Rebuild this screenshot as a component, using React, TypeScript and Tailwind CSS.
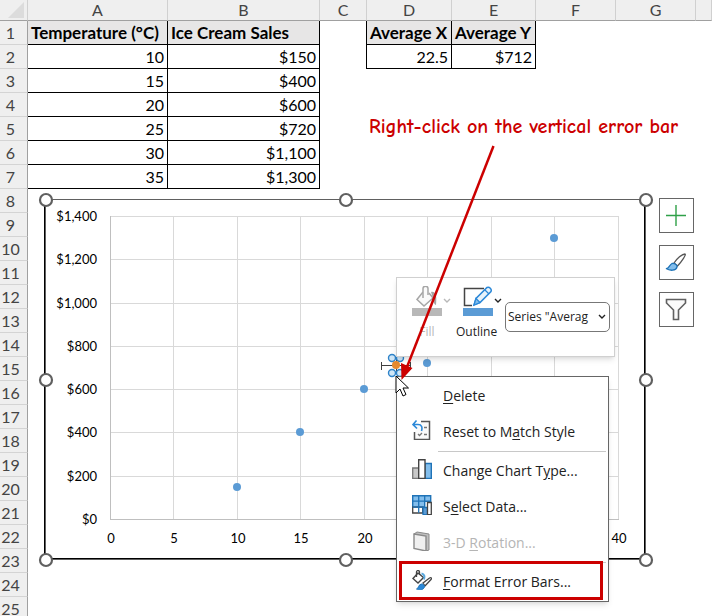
import type { ReactNode } from "react";

type Cell = { text: string; head?: boolean };

const COLUMNS = [
  { name: "A", className: "w-[140px]" },
  { name: "B", className: "w-[152px]" },
  { name: "C", className: "w-[47px]" },
  { name: "D", className: "w-[85px]" },
  { name: "E", className: "w-[84px]" },
  { name: "F", className: "w-[80px]" },
  { name: "G", className: "w-[80px]" },
  { name: "", className: "" },
];

const CELLS: Record<string, Cell> = {
  A1: { text: "Temperature (°C)", head: true },
  B1: { text: "Ice Cream Sales", head: true },
  D1: { text: "Average X", head: true },
  E1: { text: "Average Y", head: true },
  D2: { text: "22.5" },
  E2: { text: "$712" },
};

const SALES: [number, number][] = [
  [10, 150],
  [15, 400],
  [20, 600],
  [25, 720],
  [30, 1100],
  [35, 1300],
];

SALES.forEach(([temp, sales], i) => {
  CELLS[`A${i + 2}`] = { text: String(temp) };
  CELLS[`B${i + 2}`] = { text: `$${sales.toLocaleString("en-US")}` };
});

const ROWS = Array.from({ length: 25 }, (_, i) => i + 1);

// plot area
const xAt = (v: number) => Math.floor(110 + v * 12.7);
const yAt = (v: number) => Math.round(519 - v * 0.2165);

const Sheet = () => (
  <table className="w-full table-fixed border-separate border-spacing-0 text-black">
    <thead>
      <tr className="h-[21px] bg-[#efefef] text-base leading-5 text-[#444]">
        <th className="w-7 border-b border-r border-b-[#a0a0a0] border-r-[#d0d0d0] p-0">
          <svg className="ml-2 size-4" viewBox="0 0 16 16" aria-hidden="true">
            <path d="M16 0v16H0z" fill="#dcdcdc" />
          </svg>
        </th>
        {COLUMNS.map((col) => (
          <th
            key={col.name}
            className={`${col.className} border-b border-r border-b-[#a0a0a0] border-r-[#d0d0d0] p-0 font-normal`}
          >
            {col.name}
          </th>
        ))}
      </tr>
    </thead>
    <tbody>
      {ROWS.map((row) => (
        <tr key={row} className="h-6">
          <th className="border-b border-r border-b-[#d4d4d4] border-r-[#a0a0a0] bg-[#efefef] p-0 pr-1.5 text-base leading-5 font-normal text-[#444]">
            {row}
          </th>
          {COLUMNS.map((col) => {
            const cell = CELLS[`${col.name}${row}`];
            // column C draws the left edge of the averages table
            const edge = col.name === "C" && row < 3;
            if (!cell) {
              return (
                <td
                  key={col.name}
                  className={edge ? "border-r border-black p-0" : "p-0"}
                />
              );
            }
            return (
              <td
                key={col.name}
                className={
                  cell.head
                    ? "border-b border-r border-black bg-[#e7e6e6] p-0 pl-[3px] text-left text-[17px] leading-5 font-bold whitespace-nowrap"
                    : "border-b border-r border-black p-0 pr-[3px] text-right text-base leading-5"
                }
              >
                {cell.text}
              </td>
            );
          })}
        </tr>
      ))}
    </tbody>
  </table>
);

const HANDLES = [46, 346, 646]
  .flatMap((x) => [200, 380, 560].map((y) => [x, y]))
  .filter(([x, y]) => !(x === 346 && y === 380));

const Chart = () => (
  <svg
    className="absolute top-[190px] left-9 h-[380px] w-[620px] text-[13px]"
    viewBox="36 190 620 380"
    role="img"
    aria-label="Ice cream sales by temperature"
  >
    <rect x="45" y="199" width="601" height="361" fill="#fff" />
    <g shapeRendering="crispEdges" fill="none">
      <path d="M44.5 199V559M644.5 199V559M45 558.5H646" stroke="#000" />
      <path d="M45.5 199V560M645.5 199V560M45 559.5H646M45 199.5H646" stroke="#606060" />
      {[200, 400, 600, 800, 1000, 1200, 1400].map((v) => (
        <path key={v} d={`M110 ${yAt(v) + 0.5}H619`} stroke="#d9d9d9" />
      ))}
      {[5, 10, 15, 20, 25, 30, 35, 40].map((v) => (
        <path key={v} d={`M${xAt(v) + 0.5} 216V519`} stroke="#d9d9d9" />
      ))}
      <path d="M110.5 216V519.5H619" stroke="#bfbfbf" />
    </g>
    {[0, 200, 400, 600, 800, 1000, 1200, 1400].map((v) => (
      <text key={v} x="97" y={yAt(v) + 5} textAnchor="end">
        ${v.toLocaleString("en-US")}
      </text>
    ))}
    {/* 25 to 35 lie under the context menu */}
    {[0, 5, 10, 15, 20, 40].map((v) => (
      <text key={v} x={xAt(v) + 1} y="543" textAnchor="middle">
        {v}
      </text>
    ))}
    {SALES.map(([temp, sales]) => (
      <circle key={temp} cx={xAt(temp)} cy={yAt(sales)} r="4" fill="#5b9bd5" />
    ))}
    <path d="M381.5 362v8M410.5 362v8M381.5 365.5h29M396.5 358v16" stroke="#404040" fill="none" />
    {[[392, 358], [400, 358], [392, 373], [400, 373]].map(([x, y]) => (
      <circle key={`${x}-${y}`} cx={x} cy={y} r="3.5" fill="#cfe6f7" stroke="#2e83c9" strokeWidth="1.4" />
    ))}
    <circle cx="396" cy="365" r="4" fill="#e58a2e" />
    {HANDLES.map(([x, y]) => (
      <circle key={`${x}-${y}`} cx={x} cy={y} r="6" fill="#fff" stroke="#606060" strokeWidth="2.2" />
    ))}
  </svg>
);

const SideButton = ({ label, children }: { label: string; children: ReactNode }) => (
  <button
    type="button"
    aria-label={label}
    className="flex size-[35px] items-center justify-center border border-[#666] bg-white"
  >
    <svg className="size-6" viewBox="0 0 24 24" fill="none" aria-hidden="true">
      {children}
    </svg>
  </button>
);

const ChartButtons = () => (
  <div className="absolute top-[198px] left-[659px] flex flex-col gap-3">
    <SideButton label="Chart Elements">
      <path d="M11 1v21M1 11.500h20" stroke="#2fa048" strokeWidth="1.4" />
    </SideButton>
    <SideButton label="Chart Styles">
      <path d="M9 12C12 7.5 17 3 20 3c1.500.5-3 7-7.500 12z" fill="#fff" stroke="#555" strokeWidth="1.3" />
      <path d="M1 17.500c3 .5 3-3.500 6-5 2.500-.5 5.500 1.500 5 3.500-1 4-7 4-11 1.500z" fill="#83beec" stroke="#1f73b7" strokeWidth="1.3" />
    </SideButton>
    <SideButton label="Chart Filters">
      <path d="M1.500 1.500h19v3.500l-7 7v9.500h-5V12l-7-7z" fill="#fafafa" stroke="#606060" strokeWidth="1.6" />
    </SideButton>
  </div>
);

const Chevron = ({ className }: { className: string }) => (
  <svg className={className} viewBox="0 0 8 8" fill="none" aria-hidden="true">
    <path d="M1 2l3 3 3-3" stroke="currentColor" strokeWidth="1.4" />
  </svg>
);

const MiniToolbar = () => (
  <div className="absolute top-[277px] left-[396px] flex h-20 w-[219px] border border-[#d0d0d0] bg-white pt-2 text-xs leading-4 text-[#222] shadow-md">
    <button type="button" disabled className="ml-[15px] flex w-10 flex-col items-start text-[#b8b8b8]">
      <span className="flex items-center gap-px">
        <svg className="size-[30px]" viewBox="0 0 30 30" fill="none" aria-hidden="true">
          <path d="M11 6L5 13.500l7 6.500 9-8-4-5" fill="#fafafa" stroke="#a6a6a6" strokeWidth="1.5" />
          <path d="M11 12V2.500c0-3 5-3 5 0V9" fill="#fafafa" stroke="#a6a6a6" strokeWidth="1.5" />
          <path d="M19 6c5-1 6 4 5 13-3-1-2-6-3-7z" fill="#a6a6a6" />
          <path d="M0 22h30v8H0z" fill="#b8b8b8" />
        </svg>
        <Chevron className="size-2" />
      </span>
      <span className="mt-2 w-[30px] text-center">Fill</span>
    </button>
    <button type="button" className="ml-1 flex w-12 flex-col items-start">
      <span className="ml-[7px] flex items-center gap-px">
        <svg className="size-[30px] shrink-0" viewBox="0 0 30 30" fill="none" aria-hidden="true">
          <path d="M21 2.500H1.500V19.500H9" stroke="#444" strokeWidth="1.5" />
          <path d="M11 19l2-6.500L24 1.500c2.500-1 5 1.500 4 4L17 16.500z" fill="#e8f3fb" stroke="#2b88d8" strokeWidth="1.5" />
          <path d="M22 4l4 4M11 19l2-6.500 4 4z" fill="#83beec" stroke="#2b88d8" strokeWidth="1.2" />
          <path d="M0 22h30v8H0z" fill="#5b9bd5" />
        </svg>
        <Chevron className="size-2 shrink-0" />
      </span>
      <span className="mt-2">Outline</span>
    </button>
    <div className="relative mt-4 ml-px">
      <select
        aria-label="Chart element"
        className="h-[30px] w-[105px] appearance-none rounded-[5px] border border-[#777] bg-white pl-0.5 text-xs text-[#222]"
      >
        <option>Series "Averag</option>
      </select>
      <Chevron className="pointer-events-none absolute top-[11px] right-1 size-2" />
    </div>
  </div>
);

const ResetIcon = () => (
  <>
    <path d="M9 1.500h8.500v18h-15V12" fill="#fafafa" stroke="#555" strokeWidth="1.5" />
    <path d="M12 7.500h3M12 14.500h3" stroke="#777" strokeWidth="1.5" />
    <path d="M6 14l1.500 1.500L10 13" stroke="#777" strokeWidth="1.3" />
    <path d="M4.500.5L1 4.500l4 4M1.500 4.500H6c4 0 4.500 3 3.500 6.500" stroke="#2b88d8" strokeWidth="1.6" />
  </>
);

const ChartTypeIcon = () => (
  <>
    <path d="M.7 9h6v10.500h-6z" fill="#c8c8c8" stroke="#777" strokeWidth="1.3" />
    <path d="M13 4.500h6.300v15H13z" fill="#83beec" stroke="#1f73b7" strokeWidth="1.4" />
    <path d="M6.700.7H13v18.800H6.700z" fill="#fff" stroke="#444" strokeWidth="1.4" />
  </>
);

const SelectDataIcon = () => (
  <>
    <path d="M.7.7h18v5.500h-6v6H.700z" fill="#83beec" stroke="#1f73b7" strokeWidth="1.4" />
    <path d="M.700 12.200h10V18h-10z" fill="#fff" stroke="#444" strokeWidth="1.3" />
    <path d="M6.700.700v17M12.700.700v6M.700 6.200h12M.700 12.200h12" stroke="#1f73b7" strokeWidth="1.3" />
    <path d="M11 12.500h4.500v7.200H11z" fill="#5b9bd5" stroke="#1f73b7" strokeWidth="1.3" />
    <path d="M15.500 7.500h3.800v12.200h-3.800z" fill="#fff" stroke="#444" strokeWidth="1.3" />
  </>
);

const RotationIcon = () => (
  <>
    <path d="M2 3l3-2 12 2v16l-3 1z" fill="#c0c0c0" stroke="#8a8a8a" />
    <path d="M2 3l12 2v15L2 17.500z" fill="#f0f0f0" stroke="#8a8a8a" strokeWidth="1.4" />
  </>
);

const FormatIcon = () => (
  <>
    <path d="M6 3L1 8.500l5 4.500 5.500-5.500z" fill="#fff" stroke="#444" strokeWidth="1.4" />
    <path d="M4.500 7V2c0-2 3-2 3 0v3" stroke="#444" strokeWidth="1.3" />
    <path d="M9.500 3.500c3 .5 3.500 3 2.500 6" stroke="#5aa9e0" strokeWidth="2" />
    <path d="M11 13l6.500-5c2-1 2.500.5 1.500 1.500L13 16z" fill="#fff" stroke="#444" strokeWidth="1.3" />
    <path d="M4.500 19c2 0 2-5 5-5 3 0 3.500 3 2.500 4-2 2.500-5 2-7.500 1z" fill="#2b88d8" stroke="#1f73b7" />
  </>
);

interface MenuItemProps {
  icon?: ReactNode;
  before?: string;
  hotkey: string;
  after: string;
  disabled?: boolean;
}

const MenuItem = ({ icon, before, hotkey, after, disabled }: MenuItemProps) => (
  <button
    type="button"
    role="menuitem"
    disabled={disabled}
    className="flex h-9 w-full items-center gap-[11px] pl-3.5 text-left whitespace-nowrap text-[#222] disabled:text-[#b5b5b5]"
  >
    <svg className="mb-1 size-5 shrink-0" viewBox="0 0 20 20" fill="none" aria-hidden="true">
      {icon}
    </svg>
    <span>
      {before}
      <span className="underline underline-offset-2">{hotkey}</span>
      {after}
    </span>
  </button>
);

const Separator = () => <hr className="my-px mr-px ml-10 border-t border-[#c8c8c8]" />;

const ContextMenu = () => (
  <div
    role="menu"
    className="absolute top-[376px] left-[396px] w-[213px] border border-[#666] bg-white p-px text-sm shadow-md"
  >
    <MenuItem hotkey="D" after="elete" />
    <MenuItem icon={<ResetIcon />} before="Reset to M" hotkey="a" after="tch Style" />
    <Separator />
    <MenuItem icon={<ChartTypeIcon />} before="Change Chart T" hotkey="y" after="pe..." />
    <MenuItem icon={<SelectDataIcon />} before="S" hotkey="e" after="lect Data..." />
    <MenuItem icon={<RotationIcon />} before="3-D " hotkey="R" after="otation..." disabled />
    <Separator />
    <MenuItem icon={<FormatIcon />} hotkey="F" after="ormat Error Bars..." />
    <div className="pointer-events-none absolute right-[5px] bottom-px left-0.5 h-[39px] border-3 border-[#cc0000]" />
  </div>
);

const Annotation = () => (
  <>
    <p className="absolute top-[115px] left-[369px] font-['Comic_Sans_MS','Comic_Neue',Lato,cursive] text-xl leading-6 font-black whitespace-nowrap text-[#cc0000]">
      Right-click on the vertical error bar
    </p>
    <svg
      className="pointer-events-none absolute top-[140px] left-[380px] h-[260px] w-[130px]"
      viewBox="380 140 130 260"
      aria-hidden="true"
    >
      <path d="M493.500 146L407 367" stroke="#cc0000" strokeWidth="2.5" />
      <path d="M401.500 380l-.5-17 11.500 5z" fill="#cc0000" />
      <path d="M396 376v17l4-4 3 7 3-1.500-3-6.500h5.500z" fill="#fff" stroke="#000" />
    </svg>
  </>
);

export default function App() {
  return (
    <main className="relative h-screen overflow-hidden bg-white font-[Lato,'Liberation_Sans',sans-serif]">
      <Sheet />
      <Chart />
      <ChartButtons />
      <div className="font-['Open_Sans','Noto_Sans',sans-serif]">
        <MiniToolbar />
        <ContextMenu />
      </div>
      <Annotation />
    </main>
  );
}
